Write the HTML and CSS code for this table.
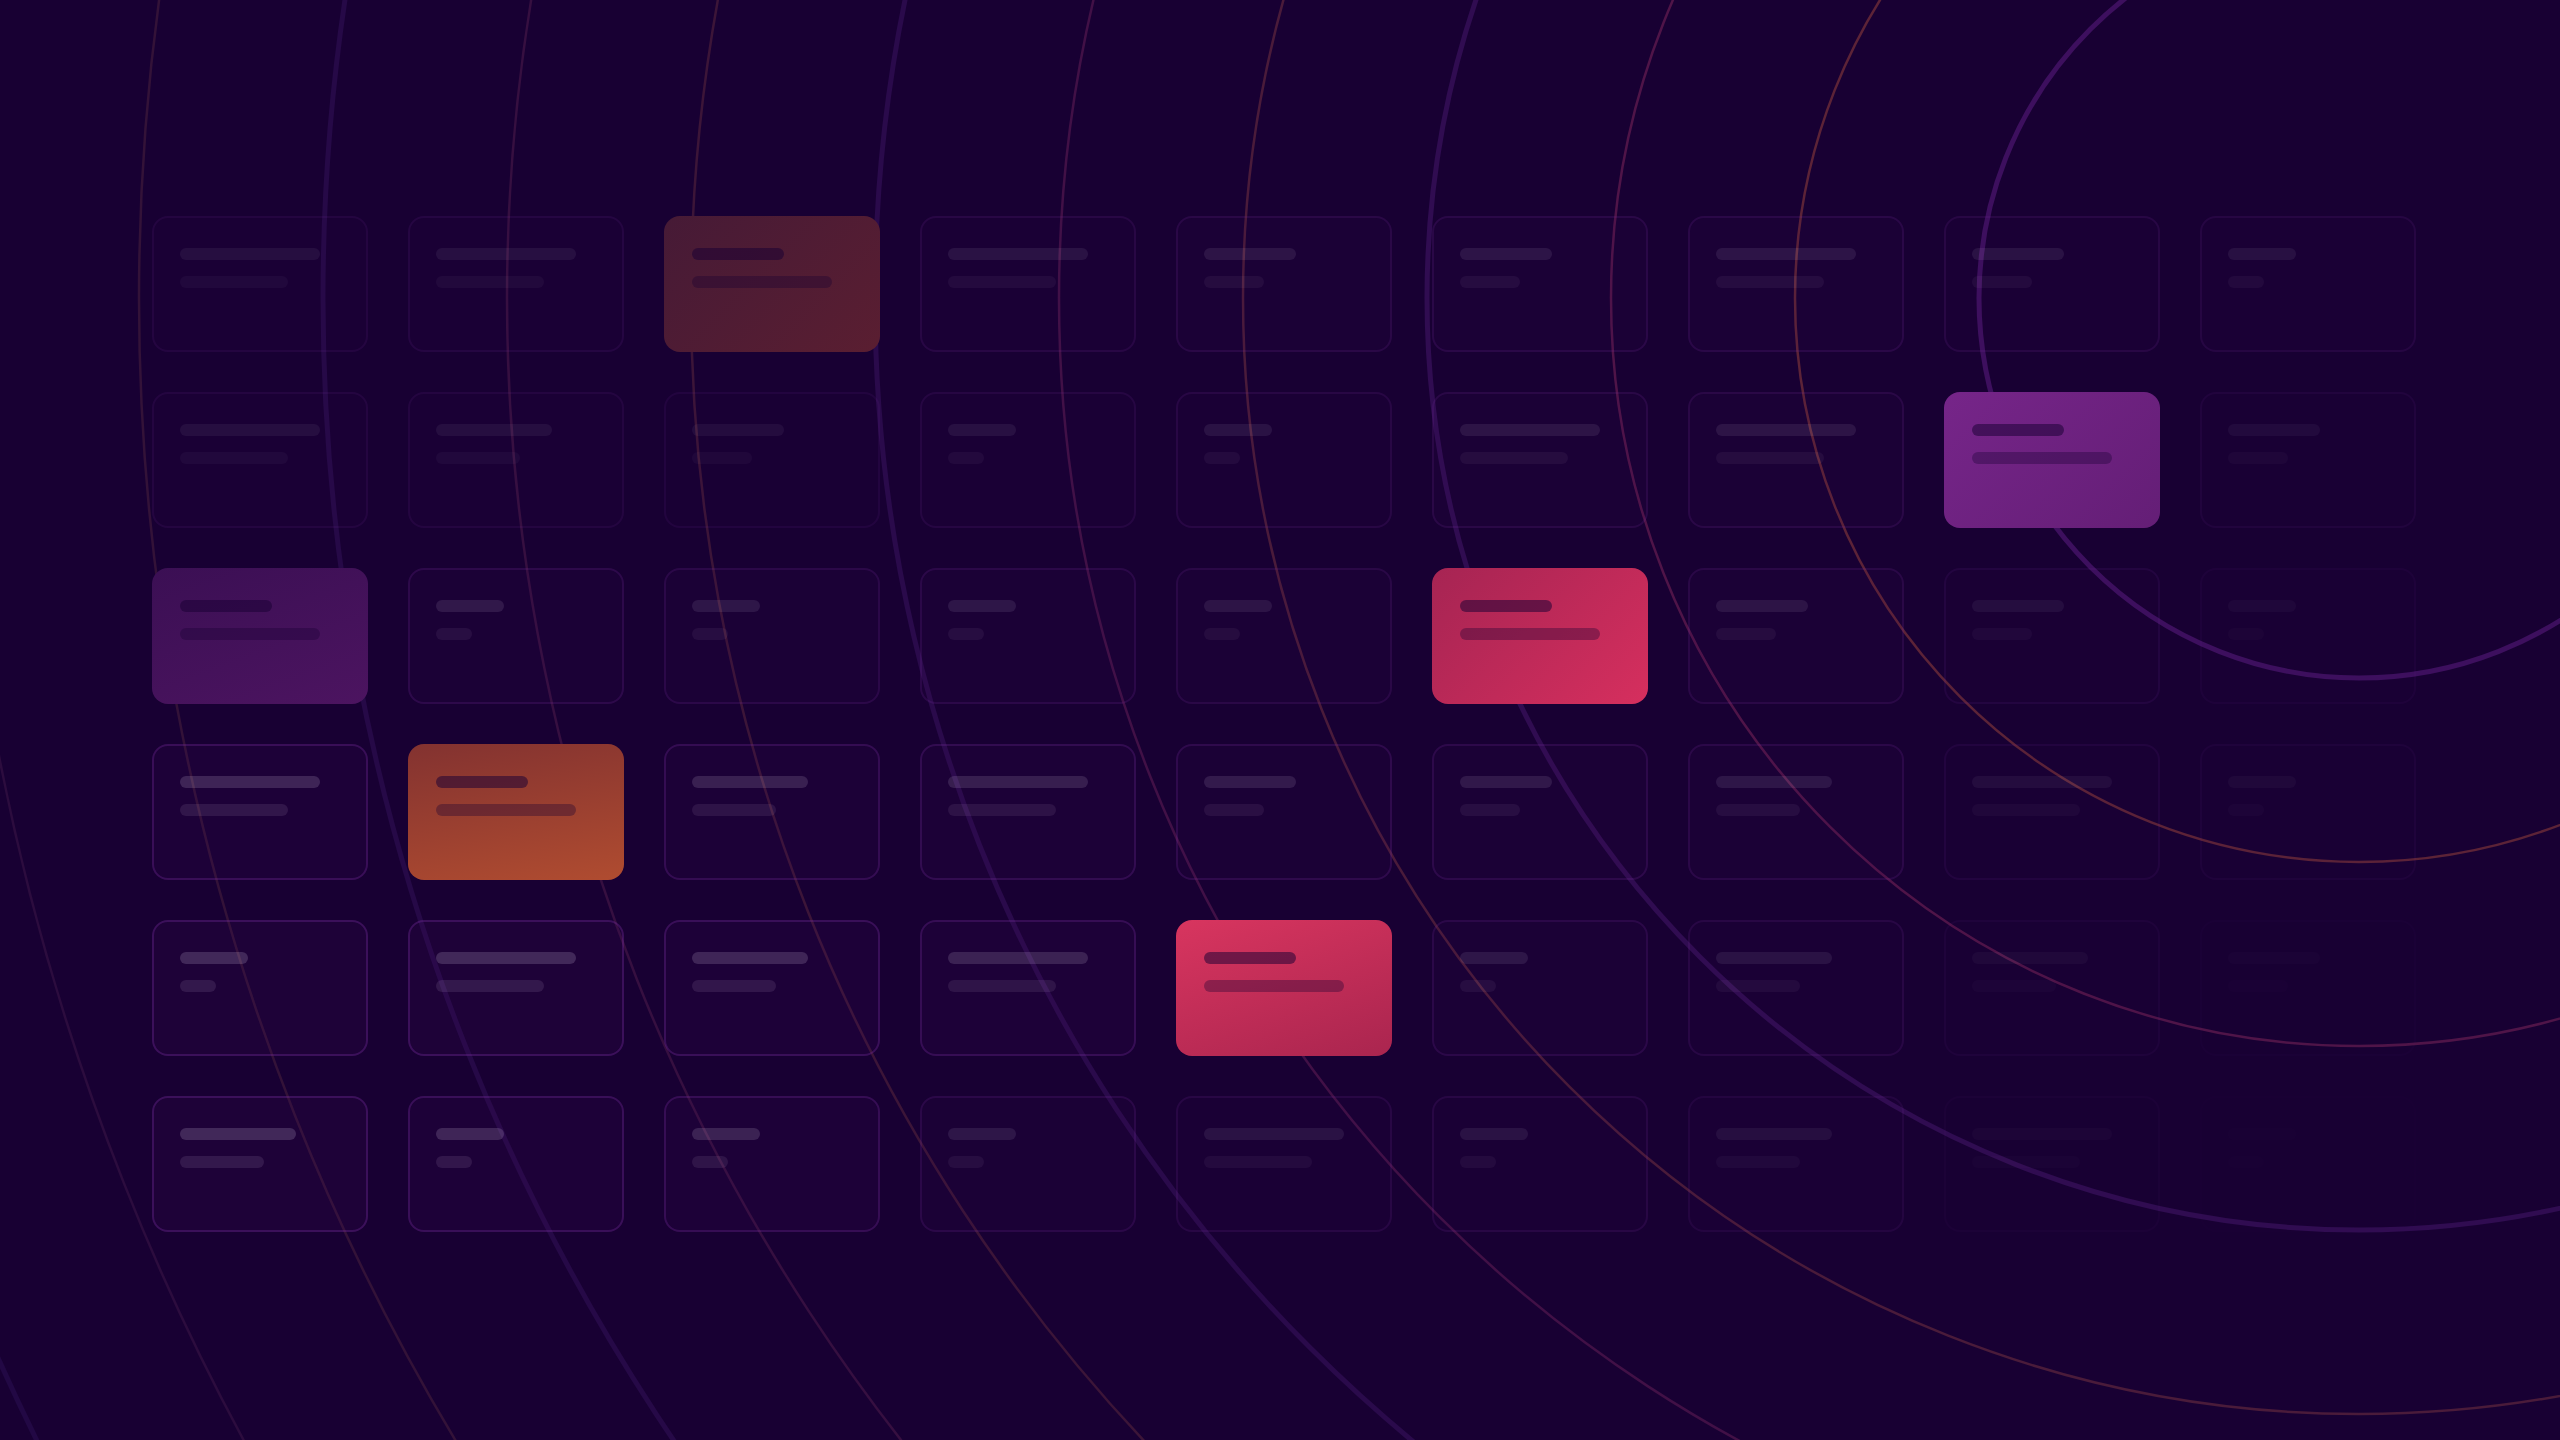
FILE: index.html
```html
<!DOCTYPE html>
<html lang="en">
<head>
<meta charset="utf-8">
<title>Grid</title>
<link rel="stylesheet" href="styles.css">
</head>
<body>
<main class="stage">
  <svg class="rings" viewBox="0 0 2560 1440" width="2560" height="1440" aria-hidden="true">
    <g fill="none">
      <circle cx="2359" cy="298" r="2588" stroke="#220844" stroke-width="5"/>
      <circle cx="2359" cy="298" r="2404" stroke="#2c0c3e" stroke-width="2.5"/>
      <circle cx="2359" cy="298" r="2220" stroke="#331238" stroke-width="2.5"/>
      <circle cx="2359" cy="298" r="2036" stroke="#260947" stroke-width="5"/>
      <circle cx="2359" cy="298" r="1852" stroke="#360f40" stroke-width="2.5"/>
      <circle cx="2359" cy="298" r="1668" stroke="#3c1538" stroke-width="2.5"/>
      <circle cx="2359" cy="298" r="1484" stroke="#2a0a4b" stroke-width="5"/>
      <circle cx="2359" cy="298" r="1300" stroke="#411046" stroke-width="2.5"/>
      <circle cx="2359" cy="298" r="1116" stroke="#4a1b3a" stroke-width="2.5"/>
      <circle cx="2359" cy="298" r="932" stroke="#300c51" stroke-width="5"/>
      <circle cx="2359" cy="298" r="748" stroke="#4f1448" stroke-width="2.5"/>
      <circle cx="2359" cy="298" r="564" stroke="#5c2337" stroke-width="2.5"/>
      <circle cx="2359" cy="298" r="380" stroke="#3d0f5e" stroke-width="5"/>
    </g>
  </svg>

  <section class="grid">
    <!-- row 1 -->
    <div class="card a" style="--o:.35"><i class="l1"></i><i class="l2"></i></div>
    <div class="card a" style="--o:.38"><i class="l1"></i><i class="l2"></i></div>
    <div class="card hl brown"><i class="l1"></i><i class="l2"></i></div>
    <div class="card a" style="--o:.45"><i class="l1"></i><i class="l2"></i></div>
    <div class="card c" style="--o:.5"><i class="l1"></i><i class="l2"></i></div>
    <div class="card c" style="--o:.52"><i class="l1"></i><i class="l2"></i></div>
    <div class="card a" style="--o:.52"><i class="l1"></i><i class="l2"></i></div>
    <div class="card c" style="--o:.45"><i class="l1"></i><i class="l2"></i></div>
    <div class="card d" style="--o:.4"><i class="l1"></i><i class="l2"></i></div>
    <!-- row 2 -->
    <div class="card a" style="--o:.35"><i class="l1"></i><i class="l2"></i></div>
    <div class="card b" style="--o:.35"><i class="l1"></i><i class="l2"></i></div>
    <div class="card c" style="--o:.3"><i class="l1"></i><i class="l2"></i></div>
    <div class="card d" style="--o:.4"><i class="l1"></i><i class="l2"></i></div>
    <div class="card d" style="--o:.45"><i class="l1"></i><i class="l2"></i></div>
    <div class="card a" style="--o:.5"><i class="l1"></i><i class="l2"></i></div>
    <div class="card a" style="--o:.5"><i class="l1"></i><i class="l2"></i></div>
    <div class="card hl violet"><i class="l1"></i><i class="l2"></i></div>
    <div class="card c" style="--o:.26"><i class="l1"></i><i class="l2"></i></div>
    <!-- row 3 -->
    <div class="card hl plum"><i class="l1"></i><i class="l2"></i></div>
    <div class="card d" style="--o:.6"><i class="l1"></i><i class="l2"></i></div>
    <div class="card d" style="--o:.55"><i class="l1"></i><i class="l2"></i></div>
    <div class="card d" style="--o:.55"><i class="l1"></i><i class="l2"></i></div>
    <div class="card d" style="--o:.5"><i class="l1"></i><i class="l2"></i></div>
    <div class="card hl rose"><i class="l1"></i><i class="l2"></i></div>
    <div class="card c" style="--o:.5"><i class="l1"></i><i class="l2"></i></div>
    <div class="card c" style="--o:.33"><i class="l1"></i><i class="l2"></i></div>
    <div class="card d" style="--o:.18"><i class="l1"></i><i class="l2"></i></div>
    <!-- row 4 -->
    <div class="card a" style="--o:.92"><i class="l1"></i><i class="l2"></i></div>
    <div class="card hl amber"><i class="l1"></i><i class="l2"></i></div>
    <div class="card b" style="--o:.8"><i class="l1"></i><i class="l2"></i></div>
    <div class="card a" style="--o:.75"><i class="l1"></i><i class="l2"></i></div>
    <div class="card c" style="--o:.65"><i class="l1"></i><i class="l2"></i></div>
    <div class="card c" style="--o:.6"><i class="l1"></i><i class="l2"></i></div>
    <div class="card b" style="--o:.55"><i class="l1"></i><i class="l2"></i></div>
    <div class="card a" style="--o:.3"><i class="l1"></i><i class="l2"></i></div>
    <div class="card d" style="--o:.2"><i class="l1"></i><i class="l2"></i></div>
    <!-- row 5 -->
    <div class="card d" style="--o:1"><i class="l1"></i><i class="l2"></i></div>
    <div class="card a" style="--o:1"><i class="l1"></i><i class="l2"></i></div>
    <div class="card b" style="--o:.95"><i class="l1"></i><i class="l2"></i></div>
    <div class="card a" style="--o:.85"><i class="l1"></i><i class="l2"></i></div>
    <div class="card hl coral"><i class="l1"></i><i class="l2"></i></div>
    <div class="card d" style="--o:.55"><i class="l1"></i><i class="l2"></i></div>
    <div class="card b" style="--o:.45"><i class="l1"></i><i class="l2"></i></div>
    <div class="card b" style="--o:.2"><i class="l1"></i><i class="l2"></i></div>
    <div class="card c" style="--o:.08"><i class="l1"></i><i class="l2"></i></div>
    <!-- row 6 -->
    <div class="card b" style="--o:1"><i class="l1"></i><i class="l2"></i></div>
    <div class="card d" style="--o:.95"><i class="l1"></i><i class="l2"></i></div>
    <div class="card d" style="--o:.85"><i class="l1"></i><i class="l2"></i></div>
    <div class="card d" style="--o:.55"><i class="l1"></i><i class="l2"></i></div>
    <div class="card a" style="--o:.45"><i class="l1"></i><i class="l2"></i></div>
    <div class="card d" style="--o:.45"><i class="l1"></i><i class="l2"></i></div>
    <div class="card b" style="--o:.35"><i class="l1"></i><i class="l2"></i></div>
    <div class="card a" style="--o:.12"><i class="l1"></i><i class="l2"></i></div>
    <div class="card d" style="--o:.04"><i class="l1"></i><i class="l2"></i></div>
  </section>
</main>
</body>
</html>
```

FILE: styles.css
```css
html, body {
  margin: 0;
  padding: 0;
  background: #180033;
  font-family: "Inter", "Liberation Sans", sans-serif;
}

.stage {
  position: relative;
  width: 2560px;
  height: 1440px;
  overflow: hidden;
  background: #180033;
}

.rings {
  position: absolute;
  inset: 0;
  display: block;
}

.grid {
  position: relative;
  display: grid;
  grid-template-columns: repeat(9, 216px);
  grid-auto-rows: 136px;
  gap: 40px;
  padding: 216px 0 0 152px;
}

.card {
  box-sizing: border-box;
  display: flex;
  flex-direction: column;
  align-items: flex-start;
  gap: 16px;
  padding: 30px 26px;
  border: 2px solid rgba(130, 50, 170, 0.3);
  border-radius: 16px;
  background: rgba(70, 15, 100, 0.12);
  opacity: var(--o, 1);
}

.card i {
  display: block;
  height: 12px;
  border-radius: 6px;
}

.card .l1 { background: rgba(245, 230, 255, 0.17); }
.card .l2 { background: rgba(245, 230, 255, 0.10); }

.card.a .l1 { width: 140px; }
.card.a .l2 { width: 108px; }
.card.b .l1 { width: 116px; }
.card.b .l2 { width: 84px; }
.card.c .l1 { width: 92px; }
.card.c .l2 { width: 60px; }
.card.d .l1 { width: 68px; }
.card.d .l2 { width: 36px; }

.card.hl {
  border: 0;
  padding: 32px 28px;
  opacity: 1;
}
.card.hl .l1 { width: 92px; background: rgba(24, 0, 51, 0.52); }
.card.hl .l2 { width: 140px; background: rgba(24, 0, 51, 0.34); }

.card.brown  { background: linear-gradient(135deg, #461a36 0%, #5a1e31 100%); }
.card.violet { background: linear-gradient(135deg, #762589 0%, #641e76 100%); }
.card.plum   { background: linear-gradient(160deg, #3b0f54 0%, #4c1460 100%); }
.card.rose   { background: linear-gradient(135deg, #a62453 0%, #d62f5e 100%); }
.card.amber  { background: linear-gradient(170deg, #833230 0%, #b04c30 100%); }
.card.coral  { background: linear-gradient(160deg, #d8355f 0%, #aa254f 100%); }
```
